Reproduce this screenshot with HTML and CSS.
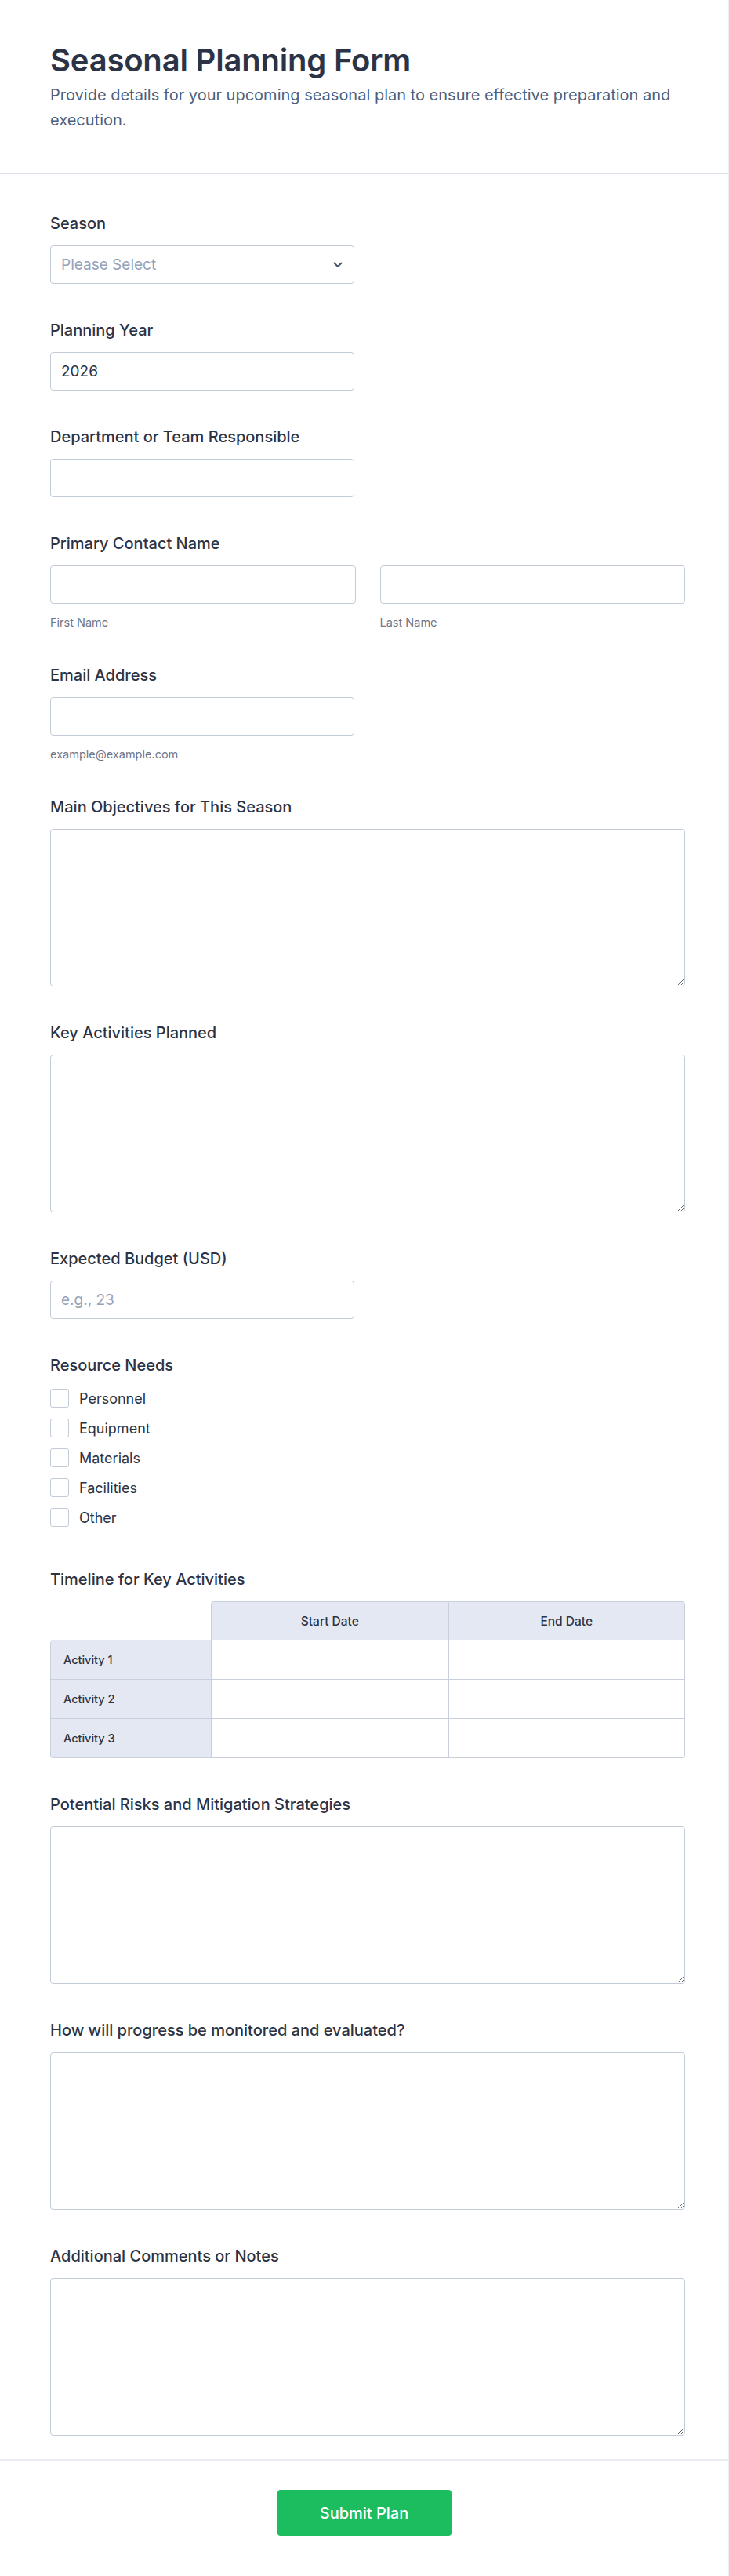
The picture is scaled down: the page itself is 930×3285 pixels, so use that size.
FILE: index.html
```html
<!DOCTYPE html>
<html lang="en">
<head>
<meta charset="utf-8">
<title>Seasonal Planning Form</title>
<link rel="stylesheet" href="styles.css">
</head>
<body>
<div class="page">
  <header class="header">
    <h1 class="title">Seasonal Planning Form</h1>
    <p class="subtitle">Provide details for your upcoming seasonal plan to ensure effective preparation and execution.</p>
  </header>

  <form class="form">
    <div class="field">
      <label class="label">Season</label>
      <div class="select half">
        <span class="placeholder">Please Select</span>
        <svg class="chevron" width="12" height="8" viewBox="0 0 12 8"><path d="M1.5 1.5 L6 6 L10.5 1.5" fill="none" stroke="#4a5470" stroke-width="2" stroke-linecap="round" stroke-linejoin="round"/></svg>
      </div>
    </div>

    <div class="field">
      <label class="label">Planning Year</label>
      <input class="input half" type="text" value="2026">
    </div>

    <div class="field">
      <label class="label">Department or Team Responsible</label>
      <input class="input half" type="text">
    </div>

    <div class="field">
      <label class="label">Primary Contact Name</label>
      <div class="name-row">
        <div class="name-col">
          <input class="input" type="text">
          <span class="sublabel">First Name</span>
        </div>
        <div class="name-col">
          <input class="input" type="text">
          <span class="sublabel">Last Name</span>
        </div>
      </div>
    </div>

    <div class="field">
      <label class="label">Email Address</label>
      <input class="input half" type="text">
      <span class="sublabel">example@example.com</span>
    </div>

    <div class="field">
      <label class="label">Main Objectives for This Season</label>
      <textarea class="textarea"></textarea>
    </div>

    <div class="field">
      <label class="label">Key Activities Planned</label>
      <textarea class="textarea"></textarea>
    </div>

    <div class="field">
      <label class="label">Expected Budget (USD)</label>
      <input class="input half" type="text" placeholder="e.g., 23">
    </div>

    <div class="field">
      <label class="label">Resource Needs</label>
      <div class="checks">
        <label class="check"><input type="checkbox" class="box"><span>Personnel</span></label>
        <label class="check"><input type="checkbox" class="box"><span>Equipment</span></label>
        <label class="check"><input type="checkbox" class="box"><span>Materials</span></label>
        <label class="check"><input type="checkbox" class="box"><span>Facilities</span></label>
        <label class="check"><input type="checkbox" class="box"><span>Other</span></label>
      </div>
    </div>

    <div class="field">
      <label class="label">Timeline for Key Activities</label>
      <table class="matrix">
        <thead>
          <tr>
            <th class="corner"></th>
            <th class="col-head">Start Date</th>
            <th class="col-head last">End Date</th>
          </tr>
        </thead>
        <tbody>
          <tr><th class="row-head">Activity 1</th><td></td><td class="last"></td></tr>
          <tr><th class="row-head">Activity 2</th><td></td><td class="last"></td></tr>
          <tr class="bottom"><th class="row-head">Activity 3</th><td></td><td class="last"></td></tr>
        </tbody>
      </table>
    </div>

    <div class="field">
      <label class="label">Potential Risks and Mitigation Strategies</label>
      <textarea class="textarea"></textarea>
    </div>

    <div class="field">
      <label class="label">How will progress be monitored and evaluated?</label>
      <textarea class="textarea"></textarea>
    </div>

    <div class="field">
      <label class="label">Additional Comments or Notes</label>
      <textarea class="textarea"></textarea>
    </div>
  </form>

  <footer class="footer">
    <button class="submit" type="button">Submit Plan</button>
  </footer>
</div>
</body>
</html>
```

FILE: styles.css
```css
* {
  box-sizing: border-box;
}

html, body {
  margin: 0;
  padding: 0;
  background: #ffffff;
}

body {
  font-family: Inter, "Noto Sans", "Liberation Sans", sans-serif;
  color: #2c3345;
}

.page {
  width: 930px;
  min-height: 3285px;
  background: #ffffff;
  border-right: 1px solid #eef0f4;
  display: flex;
  flex-direction: column;
}

.header {
  padding: 53px 55px 51px 64px;
  border-bottom: 2px solid #dfe1ee;
}

.title {
  margin: 0;
  font-size: 40px;
  line-height: 48px;
  font-weight: 600;
  color: #2c3345;
  letter-spacing: -0.2px;
}

.subtitle {
  margin: 4px 0 0;
  font-size: 20px;
  line-height: 32px;
  color: #4e5f7e;
}

.form {
  padding: 49px 55px 30px 64px;
  display: flex;
  flex-direction: column;
  gap: 45px;
}

.field {
  display: flex;
  flex-direction: column;
  align-items: flex-start;
}

.label {
  display: block;
  font-size: 20px;
  line-height: 28px;
  font-weight: 500;
  color: #2c3345;
  margin-bottom: 14px;
}

.input,
.select,
.textarea {
  border: 1px solid #c3cad8;
  border-radius: 4px;
  background: #ffffff;
  font-family: Inter, "Noto Sans", sans-serif;
  font-size: 19px;
  color: #2c3345;
}

.input {
  height: 49px;
  padding: 0 13px;
  width: 100%;
  outline: none;
}

.input::placeholder {
  color: #94a2ba;
}

.half {
  width: 388px;
}

.select {
  height: 49px;
  padding: 0 13px;
  display: flex;
  align-items: center;
  justify-content: space-between;
}

.placeholder {
  color: #94a2ba;
}

.chevron {
  margin-right: 1px;
}

.name-row {
  display: flex;
  gap: 31px;
  width: 100%;
}

.name-col {
  flex: 1;
  display: flex;
  flex-direction: column;
}

.sublabel {
  display: block;
  margin-top: 15px;
  font-size: 14.5px;
  line-height: 17px;
  color: #6f768a;
}

.textarea {
  width: 100%;
  height: 201px;
  padding: 12px 14px;
  resize: vertical;
  outline: none;
}

.checks {
  display: flex;
  flex-direction: column;
  gap: 10px;
  padding-bottom: 6px;
}

.check {
  display: flex;
  align-items: center;
  gap: 13px;
  height: 28px;
  font-size: 18px;
  color: #2c3345;
}

.box {
  appearance: none;
  -webkit-appearance: none;
  margin: 0;
  width: 24px;
  height: 24px;
  border: 1px solid #c3cad8;
  border-radius: 3px;
  background: #ffffff;
}

.matrix {
  width: 100%;
  border-collapse: separate;
  border-spacing: 0;
  table-layout: fixed;
  color: #2c3345;
}

.matrix th,
.matrix td {
  height: 50px;
  padding: 0;
  border-left: 1px solid #c9cfdd;
  border-bottom: 1px solid #c9cfdd;
}

.matrix .corner {
  width: 205px;
  border: none;
  border-bottom: 1px solid #c9cfdd;
  background: transparent;
}

.matrix .col-head {
  background: #e4e8f3;
  font-size: 15.5px;
  font-weight: 500;
  text-align: center;
  border-top: 1px solid #c9cfdd;
}

.matrix thead .col-head:nth-child(2) {
  border-top-left-radius: 4px;
}

.matrix .last {
  border-right: 1px solid #c9cfdd;
}

.matrix thead .last {
  border-top-right-radius: 4px;
}

.matrix .row-head {
  background: #e4e8f3;
  font-size: 14.5px;
  font-weight: 500;
  text-align: left;
  padding-left: 16px;
}

.matrix tbody tr:first-child .row-head {
  border-top-left-radius: 4px;
}

.matrix .bottom .row-head {
  border-bottom-left-radius: 4px;
}

.matrix .bottom .last {
  border-bottom-right-radius: 4px;
}

.matrix td {
  background: #ffffff;
}

.footer {
  flex: 1;
  border-top: 2px solid #ebecf1;
  display: flex;
  justify-content: center;
  align-items: flex-start;
  padding-top: 37px;
  background: #ffffff;
}

.submit {
  width: 222px;
  height: 59px;
  border: none;
  border-radius: 4px;
  background: #1bbd5e;
  color: #ffffff;
  font-family: Inter, "Noto Sans", sans-serif;
  font-size: 20px;
  font-weight: 500;
}
```
